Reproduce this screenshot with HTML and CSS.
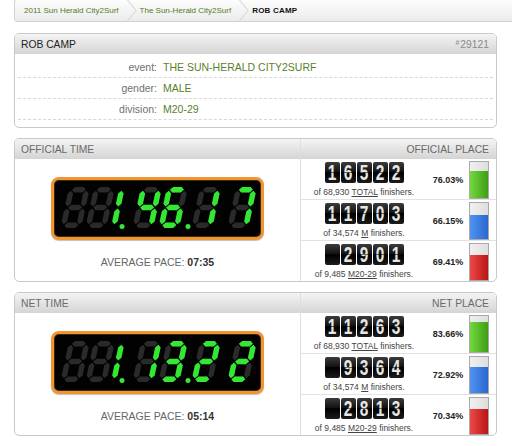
FILE: index.html
```html
<!DOCTYPE html>
<html>
<head>
<meta charset="utf-8">
<link rel="stylesheet" href="styles.css">
</head>
<body>
<nav class="crumbs">
  <a class="crumb">2011 Sun Herald City2Surf</a>
  <svg class="sep" viewBox="0 0 10 21" width="10" height="21"><polyline points="0.5,0 9,10.5 0.5,21" fill="none" stroke="#cfcfcf" stroke-width="1"/></svg>
  <a class="crumb">The Sun-Herald City2Surf</a>
  <svg class="sep" viewBox="0 0 10 21" width="10" height="21"><polyline points="0.5,0 9,10.5 0.5,21" fill="none" stroke="#cfcfcf" stroke-width="1"/></svg>
  <span class="crumb-current">ROB CAMP</span>
</nav>

<section class="card">
  <div class="hd hd-dark"><span>ROB CAMP</span><span class="bib"><span class="hash">#</span>29121</span></div>
  <div class="info">
    <div class="row"><span class="lbl">event:</span><span class="val">THE SUN-HERALD CITY2SURF</span></div>
    <div class="row"><span class="lbl">gender:</span><span class="val">MALE</span></div>
    <div class="row"><span class="lbl">division:</span><span class="val">M20-29</span></div>
  </div>
</section>

<section class="card split">
  <div class="time-col">
    <div class="hd">OFFICIAL TIME</div>
    <div class="time-body">
      <div class="lcd">
        <svg viewBox="0 0 207 57" width="207" height="57">
          <defs>
            <polygon id="sa" points="3.5,2.75 6.25,0 14.75,0 17.5,2.75 14.75,5.5 6.25,5.5"/>
            <polygon id="sg" points="3.5,20.5 6.25,17.75 14.75,17.75 17.5,20.5 14.75,23.25 6.25,23.25"/>
            <polygon id="sd" points="3.5,38.25 6.25,35.5 14.75,35.5 17.5,38.25 14.75,41 6.25,41"/>
            <polygon id="sf" points="2.75,3.75 5.5,6.5 5.5,16.75 2.75,19.5 0,16.75 0,6.5"/>
            <polygon id="se" points="2.75,21.5 5.5,24.25 5.5,34.5 2.75,37.25 0,34.5 0,24.25"/>
            <polygon id="sb" points="18.25,3.75 21,6.5 21,16.75 18.25,19.5 15.5,16.75 15.5,6.5"/>
            <polygon id="sc" points="18.25,21.5 21,24.25 21,34.5 18.25,37.25 15.5,34.5 15.5,24.25"/>
            <g id="d8"><use href="#sa"/><use href="#sb"/><use href="#sc"/><use href="#sd"/><use href="#se"/><use href="#sf"/><use href="#sg"/></g>
          </defs>
          <g transform="translate(15 7) skewX(-12)"><use href="#d8" class="off"/></g>
          <g transform="translate(40 7) skewX(-12)"><use href="#d8" class="off"/></g>
          <g transform="translate(50 7) skewX(-12)"><use href="#sb" class="on"/><use href="#sc" class="on"/></g>
          <circle cx="68" cy="46.5" r="2.5" class="on"/>
          <g transform="translate(87 7) skewX(-12)"><use href="#d8" class="off"/><use href="#sb" class="on"/><use href="#sc" class="on"/><use href="#sf" class="on"/><use href="#sg" class="on"/></g>
          <g transform="translate(113 7) skewX(-12)"><use href="#d8" class="off"/><use href="#sa" class="on"/><use href="#sc" class="on"/><use href="#sd" class="on"/><use href="#se" class="on"/><use href="#sf" class="on"/><use href="#sg" class="on"/></g>
          <circle cx="134" cy="46.5" r="2.5" class="on"/>
          <g transform="translate(146 7) skewX(-12)"><use href="#d8" class="off"/><use href="#sb" class="on"/><use href="#sc" class="on"/></g>
          <g transform="translate(182 7) skewX(-12)"><use href="#d8" class="off"/><use href="#sa" class="on"/><use href="#sb" class="on"/><use href="#sc" class="on"/></g>
        </svg>
      </div>
      <div class="pace">AVERAGE PACE: <b>07:35</b></div>
    </div>
  </div>
  <div class="place-col">
    <div class="hd hd-right">OFFICIAL PLACE</div>
    <div class="prow">
      <div class="rank">
        <div class="counter"><span class="dg"><span>1</span></span><span class="dg"><span>6</span></span><span class="dg"><span>5</span></span><span class="dg"><span>2</span></span><span class="dg"><span>2</span></span></div>
        <div class="cap">of 68,930 <u>TOTAL</u> finishers.</div>
      </div>
      <div class="pct">76.03%</div>
      <div class="bar"><div class="fill green" style="height:76.03%"></div></div>
    </div>
    <div class="prow">
      <div class="rank">
        <div class="counter"><span class="dg"><span>1</span></span><span class="dg"><span>1</span></span><span class="dg"><span>7</span></span><span class="dg"><span>0</span></span><span class="dg"><span>3</span></span></div>
        <div class="cap">of 34,574 <u>M</u> finishers.</div>
      </div>
      <div class="pct">66.15%</div>
      <div class="bar"><div class="fill blue" style="height:66.15%"></div></div>
    </div>
    <div class="prow">
      <div class="rank">
        <div class="counter"><span class="dg"></span><span class="dg"><span>2</span></span><span class="dg"><span>9</span></span><span class="dg"><span>0</span></span><span class="dg"><span>1</span></span></div>
        <div class="cap">of 9,485 <u>M20-29</u> finishers.</div>
      </div>
      <div class="pct">69.41%</div>
      <div class="bar"><div class="fill red" style="height:69.41%"></div></div>
    </div>
  </div>
</section>

<section class="card split">
  <div class="time-col">
    <div class="hd">NET TIME</div>
    <div class="time-body">
      <div class="lcd">
        <svg viewBox="0 0 207 57" width="207" height="57">
          <g transform="translate(15 7) skewX(-12)"><use href="#d8" class="off"/></g>
          <g transform="translate(40 7) skewX(-12)"><use href="#d8" class="off"/></g>
          <g transform="translate(50 7) skewX(-12)"><use href="#sb" class="on"/><use href="#sc" class="on"/></g>
          <circle cx="68" cy="46.5" r="2.5" class="on"/>
          <g transform="translate(87 7) skewX(-12)"><use href="#d8" class="off"/><use href="#sb" class="on"/><use href="#sc" class="on"/></g>
          <g transform="translate(113 7) skewX(-12)"><use href="#d8" class="off"/><use href="#sa" class="on"/><use href="#sb" class="on"/><use href="#sc" class="on"/><use href="#sd" class="on"/><use href="#sg" class="on"/></g>
          <circle cx="134" cy="46.5" r="2.5" class="on"/>
          <g transform="translate(146 7) skewX(-12)"><use href="#d8" class="off"/><use href="#sa" class="on"/><use href="#sb" class="on"/><use href="#sg" class="on"/><use href="#se" class="on"/><use href="#sd" class="on"/></g>
          <g transform="translate(182 7) skewX(-12)"><use href="#d8" class="off"/><use href="#sa" class="on"/><use href="#sb" class="on"/><use href="#sg" class="on"/><use href="#se" class="on"/><use href="#sd" class="on"/></g>
        </svg>
      </div>
      <div class="pace">AVERAGE PACE: <b>05:14</b></div>
    </div>
  </div>
  <div class="place-col">
    <div class="hd hd-right">NET PLACE</div>
    <div class="prow">
      <div class="rank">
        <div class="counter"><span class="dg"><span>1</span></span><span class="dg"><span>1</span></span><span class="dg"><span>2</span></span><span class="dg"><span>6</span></span><span class="dg"><span>3</span></span></div>
        <div class="cap">of 68,930 <u>TOTAL</u> finishers.</div>
      </div>
      <div class="pct">83.66%</div>
      <div class="bar"><div class="fill green" style="height:83.66%"></div></div>
    </div>
    <div class="prow">
      <div class="rank">
        <div class="counter"><span class="dg"></span><span class="dg"><span>9</span></span><span class="dg"><span>3</span></span><span class="dg"><span>6</span></span><span class="dg"><span>4</span></span></div>
        <div class="cap">of 34,574 <u>M</u> finishers.</div>
      </div>
      <div class="pct">72.92%</div>
      <div class="bar"><div class="fill blue" style="height:72.92%"></div></div>
    </div>
    <div class="prow">
      <div class="rank">
        <div class="counter"><span class="dg"></span><span class="dg"><span>2</span></span><span class="dg"><span>8</span></span><span class="dg"><span>1</span></span><span class="dg"><span>3</span></span></div>
        <div class="cap">of 9,485 <u>M20-29</u> finishers.</div>
      </div>
      <div class="pct">70.34%</div>
      <div class="bar"><div class="fill red" style="height:70.34%"></div></div>
    </div>
  </div>
</section>
</body>
</html>
```

FILE: styles.css
```css
* { box-sizing: border-box; }
html, body { margin: 0; padding: 0; background: #fff; }
body {
  width: 512px;
  height: 446px;
  overflow: hidden;
  font-family: "Liberation Sans", Arial, sans-serif;
  color: #333;
}

/* breadcrumb */
.crumbs {
  display: flex;
  align-items: center;
  height: 23px;
  margin: -1px -20px 0 14px;
  padding-left: 9px;
  border: 1px solid #d2d2d2;
  border-radius: 3px;
  background: linear-gradient(#fdfdfd, #ebebeb);
  font-size: 8px;
}
.crumb { color: #4f7d1f; white-space: nowrap; }
.sep { display: block; margin: 0 3px 0 8px; flex: none; }
.crumb-current { font-weight: bold; color: #111; letter-spacing: 0.2px; white-space: nowrap; }

/* cards */
.card {
  width: 483px;
  margin: 10px 0 0 14px;
  border: 1px solid #c9c9c9;
  border-radius: 5px;
  overflow: hidden;
  background: #fff;
}
.crumbs + .card { margin-top: 11px; }
.hd {
  height: 20px;
  display: flex;
  align-items: center;
  justify-content: space-between;
  padding: 0 7px 0 6px;
  background: linear-gradient(#f4f4f4, #d4d4d4);
  font-size: 10.3px;
  color: #6a6a6a;
  white-space: nowrap;
}
.hd-dark { color: #222; }
.hd-right { justify-content: flex-end; }
.bib { color: #8a8a8a; }
.hash { font-size: 7px; vertical-align: 3px; margin-right: 1px; }

.info { padding: 3px 3px 7px; }
.row {
  display: grid;
  grid-template-columns: 139px 1fr;
  column-gap: 6px;
  align-items: center;
  height: 21px;
  border-bottom: 1px dashed #d8d8d8;
  font-size: 10.5px;
}
.lbl { text-align: right; color: #707070; }
.val { color: #5a7f2a; }

/* split cards */
.split { display: flex; }
.time-col { width: 285px; flex: none; }
.place-col { width: 196px; flex: none; border-left: 1px solid #dedede; }
.time-body {
  display: flex;
  flex-direction: column;
  align-items: center;
  padding-top: 18px;
}
.lcd {
  width: 213px;
  height: 63px;
  border: 3px solid #f29530;
  border-radius: 8px;
  background: #020202;
  box-shadow: inset 0 0 0 1px #3b2a14, 0 1px 1px rgba(0,0,0,.25);
}
.lcd svg { display: block; }
.off { fill: #2a2a2a; }
.on { fill: #33e833; }
.pace {
  margin-top: 16px;
  font-size: 10.5px;
  line-height: 12px;
  color: #666;
}
.pace b { color: #333; }

.prow {
  display: grid;
  grid-template-columns: 126px 42px 20px;
  padding-right: 5px;
  height: 41px;
  border-bottom: 1px solid #e2e2e2;
}
.prow:last-child { height: 40px; border-bottom: 0; }
.rank {
  display: flex;
  flex-direction: column;
  align-items: center;
  padding-top: 3px;
}
.counter { display: flex; gap: 1px; }
.dg {
  position: relative;
  width: 15px;
  height: 21px;
  border-radius: 2px;
  background: linear-gradient(#3c3c3c, #111 48%, #000 52%, #1c1c1c);
  color: #e6e6e6;
  font-weight: bold;
  font-size: 22px;
  line-height: 21px;
  text-align: center;
}
.dg span { display: inline-block; transform: scaleX(0.7); }
.dg::after {
  content: "";
  position: absolute;
  left: 0;
  right: 0;
  top: 10px;
  height: 1px;
  background: rgba(0,0,0,.55);
}
.cap {
  margin-top: 4px;
  font-size: 8.5px;
  line-height: 10px;
  color: #444;
  white-space: nowrap;
}
.pct {
  align-self: center;
  text-align: center;
  font-size: 9px;
  font-weight: bold;
  color: #222;
  padding-top: 2px;
}
.bar {
  align-self: end;
  height: 38px;
  border: 1px solid #a9a9a9;
  background: linear-gradient(to right, #f0f0f0, #dedede);
  display: flex;
  flex-direction: column;
  justify-content: flex-end;
}
.fill { width: 100%; }
.green { background: linear-gradient(to right, #72d93c, #3f9d17); }
.blue { background: linear-gradient(to right, #4f93f0, #2a68d0); }
.red { background: linear-gradient(to right, #ee4747, #b81616); }
```
